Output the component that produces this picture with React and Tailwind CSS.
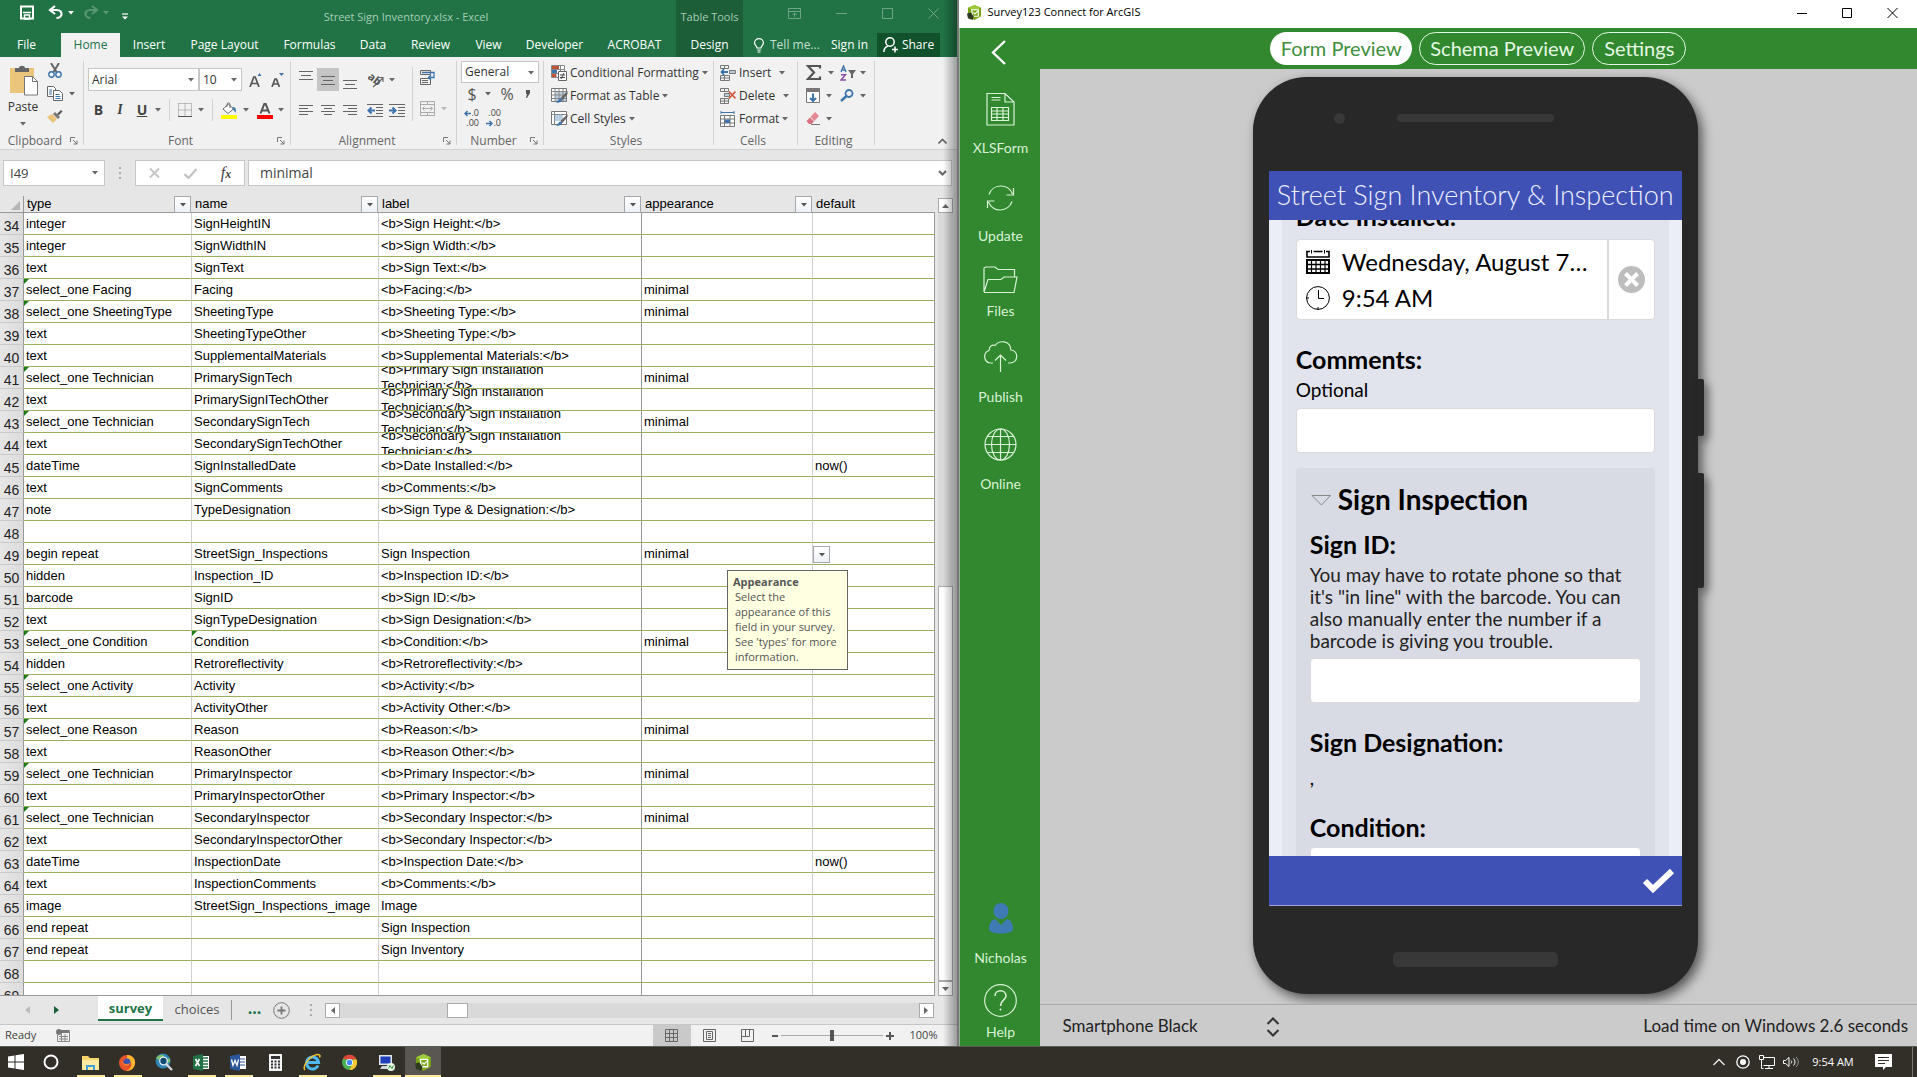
import React from "react";

const Svg = ({ w = 16, h = 16, children, className = "", ...rest }) => (
  <svg width={w} height={h} viewBox={`0 0 ${w} ${h}`} fill="none" aria-hidden="true" className={`shrink-0 ${className}`} {...rest}>
    {children}
  </svg>
);

const Caret = ({ c = "#666", className = "" }) => (
  <Svg w={6} h={4} className={className}>
    <path d="M0 0h6L3 3.6z" fill={c} />
  </Svg>
);

const Btn = ({ label, className = "", children }) => (
  <button type="button" aria-label={label} className={`flex shrink-0 items-center justify-center ${className}`}>
    {children}
  </button>
);

/* ---------- Excel title bar ---------- */

const tabs = [
  ["File", "w-[61px] pr-2"],
  ["Home", "w-[59px] bg-[#f1f1f1] text-[#217346]"],
  ["Insert", "w-[58px]"],
  ["Page Layout", "w-[93px]"],
  ["Formulas", "w-[77px]"],
  ["Data", "w-[50px]"],
  ["Review", "w-[65px]"],
  ["View", "w-[51px]"],
  ["Developer", "w-[81px]"],
  ["ACROBAT", "w-[79px]"],
];

function ExcelHeader() {
  return (
    <header className="flex h-[57px] shrink-0 bg-[#217346] text-xs text-white">
      <div className="flex w-[676px] shrink-0 flex-col">
        <div className="flex h-[33px]">
          <div className="flex w-[136px] items-start pt-[5px] pl-5">
            <Btn label="Save" className="w-[14px]">
              <Svg w={14} h={15}>
                <path d="M1 1.5h12v12H1z" stroke="#fff" strokeWidth="2" />
                <path d="M3 7.5h8M4.5 10h5v4h-5z" stroke="#fff" strokeWidth="1.5" />
              </Svg>
            </Btn>
            <Btn label="Undo" className="ml-[14px] w-4">
              <Svg w={16} h={15}>
                <path d="M7 1 2 5l5 4M2.500 5H9c3 0 4.500 2 4.500 4s-2 4-5 4" stroke="#fff" strokeWidth="2.200" />
              </Svg>
            </Btn>
            <Caret c="#fff" className="mt-[6px] ml-1" />
            <Btn label="Redo" className="ml-[9px] w-4 opacity-25">
              <Svg w={16} h={15}>
                <path d="M9 1l5 4-5 4M13.500 5H7C4 5 2.500 7 2.500 9s2 4 5 4" stroke="#fff" strokeWidth="2.200" />
              </Svg>
            </Btn>
            <Caret c="#5b9a78" className="mt-[6px] ml-1" />
            <Btn label="Customize Quick Access Toolbar" className="mt-2 ml-[13px]">
              <Svg w={6} h={7}>
                <path d="M0 1h6" stroke="#fff" strokeWidth="1.200" />
                <path d="M0 3.500h6L3 6.500z" fill="#fff" />
              </Svg>
            </Btn>
          </div>
          <h1 className="flex-1 pt-[9px] text-center text-[11px] leading-4 text-[#a8ccb7]">Street Sign Inventory.xlsx - Excel</h1>
        </div>
        <nav className="flex h-6">
          {tabs.map(([t, c]) => (
            <button key={t} type="button" className={`shrink-0 text-center whitespace-nowrap ${c}`}>
              {t}
            </button>
          ))}
        </nav>
      </div>
      <div className="flex w-[67px] shrink-0 flex-col bg-[#1b5e38]">
        <span className="h-[33px] pt-[9px] text-center text-[11px] leading-4 whitespace-nowrap text-[#a8ccb7]">Table Tools</span>
        <button type="button" className="h-6">
          Design
        </button>
      </div>
      <div className="flex min-w-0 flex-1 flex-col">
        <div className="flex h-[33px] items-start justify-end gap-[35px] pt-2 pr-5 text-[#6fa586]">
          <Btn label="Ribbon Display Options">
            <Svg w={13} h={11}>
              <path d="M.5.5h12v10H.5zM.5 3.500h12M6.500 9V5M4.500 7l2-2 2 2" stroke="currentColor" />
            </Svg>
          </Btn>
          <Btn label="Minimize">
            <Svg w={11} h={11}>
              <path d="M0 5.500h11" stroke="currentColor" />
            </Svg>
          </Btn>
          <Btn label="Maximize">
            <Svg w={11} h={11}>
              <path d="M.5.5h10v10H.5z" stroke="currentColor" />
            </Svg>
          </Btn>
          <Btn label="Close">
            <Svg w={11} h={11}>
              <path d="M.5.500l10 10M10.500.500l-10 10" stroke="currentColor" />
            </Svg>
          </Btn>
        </div>
        <div className="flex h-6 items-center">
          <button type="button" className="ml-[11px] flex w-[77px] items-center gap-[6px] whitespace-nowrap text-[#c5decf]">
            <Svg w={10} h={15}>
              <path d="M3 10C3 8 .6 7.500.6 4.800a4.400 4.200 0 0 1 8.800 0C9.400 7.500 7 8 7 10zM3.200 12h3.600M3.500 14h3" stroke="#fff" strokeWidth="1.200" />
            </Svg>
            Tell me...
          </button>
          <button type="button" className="w-[36px] whitespace-nowrap">
            Sign in
          </button>
          <button type="button" className="ml-[10px] flex h-6 w-[63px] items-center justify-center gap-1 bg-[#11512c]">
            <Svg w={15} h={16}>
              <circle cx="7" cy="5" r="4.200" stroke="#fff" strokeWidth="1.500" />
              <path d="M.8 15c.3-3.500 2-5.500 4.200-5.800M9 12.500h6M12 9.500v6" stroke="#fff" strokeWidth="1.500" />
            </Svg>
            Share
          </button>
        </div>
      </div>
    </header>
  );
}

/* ---------- Ribbon ---------- */

function Group({ title, width, launcher, children }) {
  return (
    <section className={`flex shrink-0 pt-1 ${width}`}>
      <div className="flex min-w-0 flex-1 flex-col">
        <div className="h-[72px] shrink-0">{children}</div>
        <div className="flex h-4 shrink-0 items-center pr-[5px] leading-4 text-[#666]">
          <span className="flex-1 text-center">{title}</span>
          {launcher && (
            <Btn label={`${title} settings`}>
              <Svg w={8} h={8}>
                <path d="M.5 5V.5H5M3 3l4 4M7 3.500V7H3.500" stroke="#777" />
              </Svg>
            </Btn>
          )}
        </div>
      </div>
      <div className="mb-1 w-px bg-[#d2d2d2]" />
    </section>
  );
}

const Select = ({ label, value, className }) => (
  <span className={`relative block border border-[#c6c6c6] bg-white ${className}`}>
    <select aria-label={label} className="size-full appearance-none bg-transparent pl-[3px] outline-none">
      <option>{value}</option>
    </select>
    <Caret className="pointer-events-none absolute top-[9px] right-[4px]" />
  </span>
);

const Lines = ({ d }) => (
  <Svg w={14} h={12}>
    <path d={d} stroke="#666" />
  </Svg>
);

function Clipboard() {
  return (
    <div className="flex pl-[9px]">
      <button type="button" className="flex w-7 flex-col items-center pt-1">
        <Svg w={30} h={32}>
          <path d="M2 3h24v25H2z" fill="#ecc57c" />
          <path d="M7 7V3h4c0-3 6-3 6 0h4v4z" fill="#666" />
          <path d="M16.500 11.500h8l5 5V30h-13z" fill="#fff" stroke="#777" />
          <path d="M24.500 11.500v5h5" stroke="#777" />
        </Svg>
        <span className="leading-5">Paste</span>
        <Caret className="mt-[5px]" />
      </button>
      <div className="flex flex-col gap-2 pt-[2px] pl-[10px]">
        <Btn label="Cut" className="w-4">
          <Svg w={14} h={15}>
            <path d="M3 0l5.500 9M11 0 5.500 9" stroke="#666" strokeWidth="2" />
            <circle cx="3.500" cy="11.500" r="2.700" stroke="#3c74ab" strokeWidth="1.400" />
            <circle cx="10.500" cy="11.500" r="2.700" stroke="#3c74ab" strokeWidth="1.400" />
          </Svg>
        </Btn>
        <div className="flex items-center gap-[6px]">
          <Btn label="Copy">
            <Svg w={16} h={15}>
              <path d="M.5.500h6l2 2v8h-8z" fill="#fff" stroke="#666" />
              <path d="M6.500 4.500h6l3 3v7h-9z" fill="#fff" stroke="#666" />
              <path d="M2 4h3M2 6h3M2 8h3M8.500 8.500h4M8.500 10.500h5M8.500 12.500h5" stroke="#3c74ab" />
            </Svg>
          </Btn>
          <Caret />
        </div>
        <Btn label="Format Painter" className="w-4">
          <Svg w={16} h={15}>
            <path d="M0 8l5-3 5 5-4 4z" fill="#ecc57c" />
            <path d="M6 5l2-2 5 5-2 2z" fill="#777" />
            <path d="M10 5l4-4 1.500 1.500-4 4z" fill="#555" />
          </Svg>
        </Btn>
      </div>
    </div>
  );
}

function FontGroup() {
  return (
    <div className="pt-[7px] pl-1">
      <div className="flex items-center">
        <Select label="Font" value="Arial" className="h-[23px] w-[111px]" />
        <Select label="Font size" value="10" className="h-[23px] w-[43px]" />
        <Btn label="Increase font size" className="ml-[2px] w-[22px]">
          <Svg w={13} h={14}>
            <path d="M1 14l3.800-10h1.400L10 14M2.500 10.500h6" stroke="#555" strokeWidth="1.700" />
            <path d="M8.500 3l2-3 2 3z" fill="#3c74ab" />
          </Svg>
        </Btn>
        <Btn label="Decrease font size" className="w-[22px]">
          <Svg w={13} h={14}>
            <path d="M1 14l3-8h1.400l3 8M2.200 11h5" stroke="#555" strokeWidth="1.700" />
            <path d="M8 0l2.500 3L13 0z" fill="#3c74ab" />
          </Svg>
        </Btn>
      </div>
      <div className="mt-2 flex h-[22px] items-center text-sm text-[#444]">
        <button type="button" className="w-[21px] font-bold">B</button>
        <button type="button" className="w-[22px] font-['Liberation_Serif'] font-bold italic">I</button>
        <button type="button" className="w-[22px] font-bold underline">U</button>
        <Caret className="ml-[2px]" />
        <div className="mx-2 h-[22px] w-px bg-[#d2d2d2]" />
        <Btn label="Borders">
          <Svg w={14} h={14}>
            <path d="M.5.500h13v13M.5 .5v13M7 .5v13M.5 7h13" stroke="#888" strokeDasharray="1 1" />
            <path d="M0 13.500h14" stroke="#555" />
          </Svg>
        </Btn>
        <Caret className="ml-[6px]" />
        <div className="mx-2 h-[22px] w-px bg-[#d2d2d2]" />
        <Btn label="Fill color">
          <Svg w={16} h={17}>
            <path d="M7.500 2l5 5-5.500 4.500-5-4.500zM6 5V2.500a1.500 1.500 0 0 1 3 0V6" fill="#fff" stroke="#666" />
            <path d="M11.500 5c3 0 4 2 3 6-1-2-1.500-3-3-4z" fill="#3c74ab" />
            <path d="M0 13h16v4H0z" fill="#ff0" />
          </Svg>
        </Btn>
        <Caret className="ml-[6px]" />
        <Btn label="Font color" className="ml-2">
          <Svg w={16} h={17}>
            <path d="M3.500 11.500 7.300 2h1.400l3.800 9.500M5 8.500h6" stroke="#555" strokeWidth="2" />
            <path d="M0 13h16v4H0z" fill="#f00" />
          </Svg>
        </Btn>
        <Caret className="ml-[5px]" />
      </div>
    </div>
  );
}

function AlignmentGroup() {
  return (
    <div className="flex pl-1">
      <div className="w-[117px] pt-[7px]">
        <div className="flex h-[23px] items-center">
          <Btn label="Top align" className="h-full w-[22px] pb-2"><Lines d="M0 1.500h14M2 5.500h10M0 9.500h14" /></Btn>
          <Btn label="Middle align" className="h-full w-[22px] bg-[#c5c5c5]"><Lines d="M0 2.500h14M2 6.500h10M0 10.500h14" /></Btn>
          <Btn label="Bottom align" className="h-full w-[22px] pt-2"><Lines d="M0 2.500h14M2 6.500h10M0 10.500h14" /></Btn>
          <Btn label="Orientation" className="ml-[7px] gap-1">
            <Svg w={17} h={16}>
              <path d="M5 15 15 6M15 10V5.500h-4" stroke="#666" strokeWidth="1.200" />
              <text x="0" y="9" fontSize="11" fontWeight="bold" fill="#555" transform="rotate(38 4 6)">ab</text>
            </Svg>
            <Caret />
          </Btn>
        </div>
        <div className="mt-2 flex h-[22px] items-center">
          <Btn label="Align left" className="w-[22px]"><Lines d="M0 1.500h14M0 4.500h9M0 7.500h14M0 10.500h9" /></Btn>
          <Btn label="Center" className="w-[22px]"><Lines d="M0 1.500h14M3 4.500h8M0 7.500h14M3 10.500h8" /></Btn>
          <Btn label="Align right" className="w-[22px]"><Lines d="M0 1.500h14M5 4.500h9M0 7.500h14M5 10.500h9" /></Btn>
          <Btn label="Decrease indent" className="ml-[3px] w-[22px]">
            <Svg w={16} h={13}>
              <path d="M0 .5h16M9 3.500h7M9 6.500h7M9 9.500h7M0 12.500h16" stroke="#666" />
              <path d="M8 6.500H2M4.500 3.500l-3 3 3 3" stroke="#3c74ab" strokeWidth="2" />
            </Svg>
          </Btn>
          <Btn label="Increase indent" className="w-[22px]">
            <Svg w={16} h={13}>
              <path d="M0 .5h16M9 3.500h7M9 6.500h7M9 9.500h7M0 12.500h16" stroke="#666" />
              <path d="M0 6.500h6M3.500 3.500l3 3-3 3" stroke="#3c74ab" strokeWidth="2" />
            </Svg>
          </Btn>
        </div>
      </div>
      <div className="mt-[6px] h-[54px] w-px bg-[#d2d2d2]" />
      <div className="flex flex-col gap-[15px] pt-[9px] pl-[7px]">
        <Btn label="Wrap text" className="w-4">
          <Svg w={16} h={16}>
            <path d="M.5.500h10v4H.5zM.5 8.500h10v6H.5zM2 10.500h6M2 12.500h6" stroke="#666" />
            <path d="M2 2.500h12v5h-5M11 5l-2.500 2.500L11 10" stroke="#3c74ab" strokeWidth="1.300" />
          </Svg>
        </Btn>
        <div className="flex items-center gap-[6px]">
          <Btn label="Merge and center">
            <Svg w={15} h={15}>
              <path d="M.5.500h14v14H.5zM.5 3.500h14M.5 11.500h14M7.500 .5v3M7.500 11.500v3M2.500 7.500h10M4.500 5.500l-2 2 2 2M10.500 5.500l2 2-2 2" stroke="#aaa" />
            </Svg>
          </Btn>
          <Caret c="#bbb" />
        </div>
      </div>
    </div>
  );
}

function NumberGroup() {
  return (
    <div className="pl-1">
      <Select label="Number format" value="General" className="h-[22px] w-[78px]" />
      <div className="flex h-[22px] items-center text-base leading-4 text-[#555]">
        <button type="button" className="w-[22px]">$</button>
        <Caret className="ml-[2px]" />
        <button type="button" className="ml-1 w-6">%</button>
        <button type="button" aria-label="Comma style" className="flex w-4 justify-center">
          <Svg w={5} h={8}><path d="M1 0h4v3L2 8H1l1-4H1z" fill="#555" /></Svg>
        </button>
      </div>
      <div className="flex gap-[6px] pt-[3px] pl-[2px] text-[9px] leading-[10px] text-[#444]">
        <button type="button" aria-label="Increase decimal" className="flex w-4 flex-col items-end">
          <span className="flex items-center">
            <Svg w={7} h={7}><path d="M7 3.500H1M3.500 1 1 3.500 3.500 6" stroke="#3c74ab" strokeWidth="1.500" /></Svg>.0
          </span>
          <span>.00</span>
        </button>
        <button type="button" aria-label="Decrease decimal" className="flex w-4 flex-col items-end">
          <span>.00</span>
          <span className="flex items-center">
            <Svg w={7} h={7}><path d="M0 3.500h6M3.500 1 6 3.500 3.500 6" stroke="#3c74ab" strokeWidth="1.500" /></Svg>.0
          </span>
        </button>
      </div>
    </div>
  );
}

const CondIcon = () => (
  <Svg w={17} h={16}>
    <path d="M.5.500h13v12H.5zM.5 4.500h13M.5 8.500h13M5 .5v12M9.500 .5v12" fill="#fff" stroke="#888" />
    <path d="M1 1h7v3H1zM1 9h4v3H1z" fill="#c2513a" />
    <path d="M1 5h5v3H1z" fill="#3c74ab" />
    <path d="M7.500 6.500h8v9h-8z" fill="#fff" stroke="#666" />
    <path d="M9 10h5M9 12.500h5M13 8l-3 6" stroke="#444" />
  </Svg>
);
const TableIcon = ({ cell }) => (
  <Svg w={17} h={16}>
    <path d="M.5.500h15v13H.5z" fill="#fff" stroke="#777" />
    {cell ? <path d="M4 4h8v6H4z" fill="#b9cfe2" /> : <path d="M4 4h11v9H4z" fill="#b9cfe2" />}
    <path d={cell ? "M3.500 .5v13M.5 3.500h15" : "M.5 3.500h15M.5 7h15M.5 10.500h15M4 .5v13M8 .5v13M12 .5v13"} stroke="#888" />
    <path d="M16.500 3v3l-5 6-2-2z" fill="#666" />
    <path d="M4 15c3 0 3-5 6-4.500 2.500 1 1 4.500-6 4.500z" fill="#3c74ab" />
  </Svg>
);
const InsertIcon = () => (
  <Svg w={17} h={16}>
    <path d="M.5.500h4v3h-4zM4.500.500h4v3h-4zM.5 10.500h4v5h-4zM4.500 10.500h5v5h-5zM.5 13h9" stroke="#777" />
    <path d="M9.500 5.500h6v3h-6z" fill="#b9cfe2" stroke="#777" />
    <path d="M8 7H2M4 4 1.500 7 4 10" stroke="#3c74ab" strokeWidth="1.800" />
  </Svg>
);
const DeleteIcon = () => (
  <Svg w={17} h={16}>
    <path d="M.5.500h4v3h-4zM4.500.500h4v3h-4zM.5 10.500h4v5h-4zM4.500 10.500h4v5h-4zM.5 13h8" stroke="#777" />
    <path d="M4.500 5.500h5v3h-5z" fill="#b9cfe2" stroke="#777" />
    <path d="M9 3.500l6.500 7M15.500 3.500 9 10.500" stroke="#d0583a" strokeWidth="1.800" />
  </Svg>
);
const FormatIcon = () => (
  <Svg w={17} h={16}>
    <path d="M1 1.500h13M1 0v3M14 0v3" stroke="#3c74ab" />
    <path d="M.5 4.500h14v11H.5zM.5 8h14M.5 12h14M4.500 4.500v11M10 4.500v11" fill="#fff" stroke="#777" />
    <path d="M5 8.500h5v3.500H5z" fill="#3c74ab" />
  </Svg>
);

const Cmd = ({ icon, gap = "gap-[3px]", children }) => (
  <button type="button" className={`flex h-[23px] items-center whitespace-nowrap ${gap}`}>
    <span className="flex items-center gap-[2px]">{icon}{children}</span>
    <Caret />
  </button>
);

function EditingGroup() {
  return (
    <div className="grid grid-cols-[34px_auto] pl-2">
      <Btn label="AutoSum" className="h-[23px] justify-start! gap-[6px]">
        <Svg w={16} h={15}><path d="M14 3.500V1H2l6 6.500L2 14h12v-2.500" stroke="#555" strokeWidth="2.200" /></Svg><Caret />
      </Btn>
      <Btn label="Sort and filter" className="h-[23px] justify-start! gap-1">
        <Svg w={16} h={16}>
          <path d="M1 7l2.500-6L6 7M2 5h3" stroke="#3c74ab" strokeWidth="1.400" />
          <path d="M1 9.700h4.500L1 15h5" stroke="#8a4fa8" strokeWidth="1.400" />
          <path d="M8 5h8l-3 4v4h-2V9z" fill="#666" />
        </Svg><Caret />
      </Btn>
      <Btn label="Fill" className="h-[23px] justify-start! gap-[6px]">
        <Svg w={14} h={15}>
          <path d="M.5.500h13v14H.5z" fill="#fff" stroke="#777" />
          <path d="M0 0h14v4H0z" fill="#777" />
          <path d="M7 5.500V13M4 10l3 3 3-3" stroke="#3c74ab" strokeWidth="2" />
        </Svg><Caret />
      </Btn>
      <Btn label="Find and select" className="h-[23px] justify-start! gap-[6px]">
        <Svg w={14} h={13}>
          <circle cx="9" cy="4.500" r="3.500" stroke="#3c74ab" strokeWidth="1.800" />
          <path d="M6.500 7 1 12" stroke="#3c74ab" strokeWidth="2.400" />
        </Svg><Caret />
      </Btn>
      <Btn label="Clear" className="h-[23px] justify-start! gap-[6px]">
        <Svg w={14} h={13}>
          <path d="M9 0l4 4-4.500 5-4-4z" fill="#e58a95" />
          <path d="M4 5.500 8 9.500 5.500 12H3L.5 9z" fill="#d9707e" />
          <path d="M5 12.500h9" stroke="#777" />
        </Svg><Caret />
      </Btn>
    </div>
  );
}

function Ribbon() {
  return (
    <div className="flex h-[93px] shrink-0 border-b border-[#d2d2d2] bg-[#f1f1f1] text-xs text-[#333]">
      <Group title="Clipboard" width="w-[84px]" launcher><Clipboard /></Group>
      <Group title="Font" width="w-[207px]" launcher><FontGroup /></Group>
      <Group title="Alignment" width="w-[166px]" launcher><AlignmentGroup /></Group>
      <Group title="Number" width="w-[87px]" launcher><NumberGroup /></Group>
      <Group title="Styles" width="w-[170px]">
        <div className="pl-[7px]">
          <Cmd icon={<CondIcon />}>Conditional Formatting</Cmd>
          <Cmd icon={<TableIcon />}>Format as Table</Cmd>
          <Cmd icon={<TableIcon cell />}>Cell Styles</Cmd>
        </div>
      </Group>
      <Group title="Cells" width="w-[84px]">
        <div className="pl-[6px]">
          <Cmd icon={<InsertIcon />} gap="gap-2">Insert</Cmd>
          <Cmd icon={<DeleteIcon />} gap="gap-2">Delete</Cmd>
          <Cmd icon={<FormatIcon />}>Format</Cmd>
        </div>
      </Group>
      <Group title="Editing" width="w-[77px]"><EditingGroup /></Group>
      <div className="flex flex-1 items-end justify-end pr-3 pb-[5px]">
        <Btn label="Collapse the Ribbon">
          <Svg w={9} h={6}><path d="M.5 5.500l4-4 4 4" stroke="#666" strokeWidth="1.600" /></Svg>
        </Btn>
      </div>
    </div>
  );
}

const Dots = () => (
  <Svg w={2} h={12}><path d="M0 0h2v2H0zM0 5h2v2H0zM0 10h2v2H0z" fill="#aaa" /></Svg>
);

function FormulaBar() {
  return (
    <div className="flex h-[46px] shrink-0 items-start bg-[#e6e6e6] pt-[10px] pr-[7px] pl-[3px] text-sm text-[#444]">
      <div className="flex h-[26px] w-[102px] shrink-0 items-center border border-[#c6c6c6] bg-white pr-[6px]">
        <input aria-label="Name box" defaultValue="I49" className="w-full min-w-0 flex-1 bg-transparent pl-[6px] text-[13px] outline-none" />
        <Caret />
      </div>
      <span className="flex h-[26px] w-[30px] shrink-0 items-center justify-center"><Dots /></span>
      <div className="flex h-[26px] w-[110px] shrink-0 items-center border border-[#c6c6c6] bg-white">
        <Btn label="Cancel" className="w-[36px]"><Svg w={11} h={10}><path d="M1 .5l9 9M10 .5l-9 9" stroke="#c4c4c4" strokeWidth="2" /></Svg></Btn>
        <Btn label="Enter" className="w-[36px]"><Svg w={13} h={11}><path d="M.5 6l4 4 8-9" stroke="#c4c4c4" strokeWidth="2.400" /></Svg></Btn>
        <button type="button" aria-label="Insert function" className="w-[36px] font-['Liberation_Serif'] text-base leading-4 text-[#444] italic">
          f<span className="text-xs font-bold">x</span>
        </button>
      </div>
      <div className="ml-[3px] flex h-[26px] min-w-0 flex-1 items-center border border-[#c6c6c6] bg-white pr-1">
        <input aria-label="Formula" defaultValue="minimal" className="min-w-0 flex-1 bg-transparent pl-[11px] outline-none" />
        <Svg w={9} h={6}><path d="M1 1l3.500 3.500L8 1" stroke="#666" strokeWidth="2" /></Svg>
      </div>
    </div>
  );
}

/* ---------- Sheet ---------- */

const rows = [
  [34, "integer", "SignHeightIN", "<b>Sign Height:</b>"],
  [35, "integer", "SignWidthIN", "<b>Sign Width:</b>"],
  [36, "text", "SignText", "<b>Sign Text:</b>"],
  [37, "select_one Facing", "Facing", "<b>Facing:</b>", "minimal"],
  [38, "select_one SheetingType", "SheetingType", "<b>Sheeting Type:</b>", "minimal"],
  [39, "text", "SheetingTypeOther", "<b>Sheeting Type:</b>"],
  [40, "text", "SupplementalMaterials", "<b>Supplemental Materials:</b>"],
  [41, "select_one Technician", "PrimarySignTech", "<b>Primary Sign Installation Technician:</b>", "minimal"],
  [42, "text", "PrimarySignITechOther", "<b>Primary Sign Installation Technician:</b>"],
  [43, "select_one Technician", "SecondarySignTech", "<b>Secondary Sign Installation Technician:</b>", "minimal"],
  [44, "text", "SecondarySignTechOther", "<b>Secondary Sign Installation Technician:</b>"],
  [45, "dateTime", "SignInstalledDate", "<b>Date Installed:</b>", "", "now()"],
  [46, "text", "SignComments", "<b>Comments:</b>"],
  [47, "note", "TypeDesignation", "<b>Sign Type & Designation:</b>"],
  [48],
  [49, "begin repeat", "StreetSign_Inspections", "Sign Inspection", "minimal"],
  [50, "hidden", "Inspection_ID", "<b>Inspection ID:</b>"],
  [51, "barcode", "SignID", "<b>Sign ID:</b>"],
  [52, "text", "SignTypeDesignation", "<b>Sign Designation:</b>"],
  [53, "select_one Condition", "Condition", "<b>Condition:</b>", "minimal"],
  [54, "hidden", "Retroreflectivity", "<b>Retroreflectivity:</b>"],
  [55, "select_one Activity", "Activity", "<b>Activity:</b>"],
  [56, "text", "ActivityOther", "<b>Activity Other:</b>"],
  [57, "select_one Reason", "Reason", "<b>Reason:</b>", "minimal"],
  [58, "text", "ReasonOther", "<b>Reason Other:</b>"],
  [59, "select_one Technician", "PrimaryInspector", "<b>Primary Inspector:</b>", "minimal"],
  [60, "text", "PrimaryInspectorOther", "<b>Primary Inspector:</b>"],
  [61, "select_one Technician", "SecondaryInspector", "<b>Secondary Inspector:</b>", "minimal"],
  [62, "text", "SecondaryInspectorOther", "<b>Secondary Inspector:</b>"],
  [63, "dateTime", "InspectionDate", "<b>Inspection Date:</b>", "", "now()"],
  [64, "text", "InspectionComments", "<b>Comments:</b>"],
  [65, "image", "StreetSign_Inspections_image", "Image"],
  [66, "end repeat", "", "Sign Inspection"],
  [67, "end repeat", "", "Sign Inventory"],
  [68],
  [69],
];

const colLine = ["border-r-[#d0d0d0]", "border-r-[#d0d0d0]", "border-r-[#999]", "border-r-[#d0d0d0]", "border-r-[#999]"];

const Flag = () => (
  <Svg w={5} h={5} className="absolute top-0 left-0"><path d="M0 0h5L0 5z" fill="#1a7a1a" /></Svg>
);

function DropButton({ label, className = "" }) {
  return (
    <button type="button" aria-label={label} className={`absolute flex size-[17px] items-center justify-center border border-[#a5a9ae] bg-linear-to-b from-white to-[#eef1f6] ${className}`}>
      <Caret c="#555" />
    </button>
  );
}

function Sheet() {
  return (
    <div className="flex min-h-0 flex-1 bg-[#e6e6e6]">
      <div className="relative min-w-0 flex-1 overflow-hidden border-b border-[#999] font-['Liberation_Sans',Arial,sans-serif] text-black">
        <table className="w-full table-fixed border-separate border-spacing-0 text-[13px]">
          <colgroup>
            <col className="w-6" />
            <col className="w-[168px]" />
            <col className="w-[187px]" />
            <col className="w-[263px]" />
            <col className="w-[171px]" />
            <col />
          </colgroup>
          <thead>
            <tr className="h-[17px]">
              <th aria-label="Select all" className="border-r border-b border-[#999] p-0">
                <Svg w={9} h={9} className="mt-[2px] ml-[11px]"><path d="M9 0v9H0z" fill="#b5b5b5" /></Svg>
              </th>
              {["type", "name", "label", "appearance", "default"].map((h, i) => (
                <th key={h} scope="col" className="relative border-b border-[#999] p-0 pl-[3px] text-left leading-4 font-normal">
                  {h}
                  {i < 4 && <DropButton label={`Filter ${h}`} className="top-0 right-px" />}
                </th>
              ))}
            </tr>
          </thead>
          <tbody className="bg-white">
            {rows.map(([n, ...cells]) => (
              <tr key={n} className="h-[22px]">
                <th scope="row" className="border-r border-b border-r-[#999] border-b-[#c9c9c9] bg-linear-to-r from-[#e6e6e6] to-[#dcdcdc] p-0 pt-1 text-center text-[14px] leading-4 font-normal text-[#222]">
                  {n}
                </th>
                {colLine.map((c, i) => (
                  <td key={i} className={`relative border-r border-b border-b-[#9bb05f] p-0 ${c}`}>
                    <div className="flex h-[21px] items-center overflow-hidden pl-[2px]">
                      <span className={i === 2 ? "w-[210px] shrink-0 leading-4" : "whitespace-nowrap leading-4"}>{cells[i]}</span>
                    </div>
                    {((i === 0 && (cells[0] || "").startsWith("select")) || (i === 1 && n === 53)) && <Flag />}
                    {n === 49 && i === 4 && <DropButton label="Choose appearance" className="top-[3px] left-0" />}
                  </td>
                ))}
              </tr>
            ))}
          </tbody>
        </table>
        <div role="tooltip" className="absolute top-[374px] left-[727px] h-[100px] w-[121px] border border-[#666] bg-[#ffffe1] px-[7px] py-[3px] font-['Open_Sans','Noto_Sans',sans-serif] text-[11px] leading-[15px] whitespace-nowrap text-[#555]">
          <b className="block -ml-[2px]">Appearance</b>
          Select the
          <br />
          appearance of this
          <br />
          field in your survey.
          <br />
          See 'types' for more
          <br />
          information.
        </div>
      </div>
      <div className="mr-[6px] ml-[3px] flex w-[15px] shrink-0 flex-col pt-[2px]">
        <Btn label="Scroll up" className="h-[15px] border border-[#aaa] bg-white"><Svg w={7} h={4}><path d="M0 4h7L3.500 0z" fill="#666" /></Svg></Btn>
        <div className="min-h-0 flex-[374] bg-[#d9d9d9]" />
        <div className="min-h-0 flex-[395] border border-[#aaa] bg-white" />
        <Btn label="Scroll down" className="h-[15px] border border-[#aaa] bg-white"><Svg w={7} h={4}><path d="M0 0h7L3.500 4z" fill="#666" /></Svg></Btn>
      </div>
    </div>
  );
}

function SheetTabs() {
  return (
    <div className="flex h-7 shrink-0 items-center bg-[#e6e6e6] pr-[25px] text-[13px] text-[#555]">
      <Btn label="Previous sheets" className="ml-[25px]"><Svg w={5} h={8}><path d="M5 0v8L0 4z" fill="#bbb" /></Svg></Btn>
      <Btn label="Next sheets" className="ml-6"><Svg w={5} h={8}><path d="M0 0v8l5-4z" fill="#1b5e38" /></Svg></Btn>
      <button type="button" className="ml-[39px] h-[25px] w-[65px] shrink-0 self-start border-b-2 border-[#217346] bg-white pt-[3px] font-bold text-[#217346]">survey</button>
      <button type="button" className="h-5 w-[69px] shrink-0 border-r border-[#999]">choices</button>
      <button type="button" aria-label="More sheets" className="w-[45px] shrink-0 pb-1 text-base leading-4 font-bold text-[#217346]">...</button>
      <Btn label="New sheet" className="-ml-1">
        <Svg w={17} h={17}><circle cx="8.500" cy="8.500" r="7.800" stroke="#777" /><path d="M8.500 4.500v8M4.500 8.500h8" stroke="#777" strokeWidth="1.800" /></Svg>
      </Btn>
      <span className="mr-[13px] ml-5"><Dots /></span>
      <div className="flex h-[15px] flex-1 bg-[#d9d9d9]">
        <Btn label="Scroll left" className="w-[15px] border border-[#aaa] bg-white"><Svg w={4} h={7}><path d="M4 0v7L0 3.500z" fill="#666" /></Svg></Btn>
        <div className="ml-[107px] w-[21px] border border-[#aaa] bg-white" />
        <Btn label="Scroll right" className="ml-auto w-[15px] border border-[#aaa] bg-white"><Svg w={4} h={7}><path d="M0 0v7l4-3.500z" fill="#666" /></Svg></Btn>
      </div>
    </div>
  );
}

function StatusBar() {
  return (
    <footer className="flex h-[22px] shrink-0 items-center border-t border-[#c6c6c6] bg-[#f1f1f1] pl-[5px] text-[11px] text-[#444]">
      <span className="w-[51px]">Ready</span>
      <Btn label="Macro recording">
        <Svg w={14} h={13}>
          <path d="M3.500 1.500h10v11H1.500V6M3 7.500h9M3 10h9M5.500 5v7M9 5v7" stroke="#888" />
          <path d="M4 1h9v3H4z" fill="#777" /><circle cx="3" cy="3" r="3" fill="#777" />
        </Svg>
      </Btn>
      <div className="ml-auto flex h-full items-center">
        <Btn label="Normal view" className="h-full w-[38px] bg-[#c9c9c9]"><Svg w={13} h={13}><path d="M.5.500h12v12H.5zM.5 4.500h12M.5 8.500h12M4.500.500v12M8.500.500v12" stroke="#666" /></Svg></Btn>
        <Btn label="Page layout view" className="w-[38px]"><Svg w={13} h={13}><path d="M.5.500h12v12H.5zM3.500 2.500h6v8h-6zM5 4.500h3M5 6.500h3M5 8.500h3" stroke="#666" /></Svg></Btn>
        <Btn label="Page break preview" className="w-[38px]"><Svg w={13} h={13}><path d="M.5.500h12v12H.5zM4.500.500v7M8.500.500v7M.5 7.500h8" stroke="#666" /></Svg></Btn>
        <Btn label="Zoom out" className="ml-[5px]"><Svg w={6} h={8}><path d="M0 4h6" stroke="#555" strokeWidth="2" /></Svg></Btn>
        <input
          type="range"
          aria-label="Zoom"
          defaultValue="50"
          className="mx-[3px] h-[11px] w-[102px] appearance-none bg-linear-to-b from-transparent from-45% via-[#aaa] via-50% to-transparent to-55% [&::-webkit-slider-thumb]:h-[11px] [&::-webkit-slider-thumb]:w-1 [&::-webkit-slider-thumb]:appearance-none [&::-webkit-slider-thumb]:bg-[#555]"
        />
        <Btn label="Zoom in"><Svg w={8} h={8}><path d="M0 4h8M4 0v8" stroke="#555" strokeWidth="2" /></Svg></Btn>
        <button type="button" className="mr-[21px] ml-4 w-[28px] whitespace-nowrap">100%</button>
      </div>
    </footer>
  );
}

function Excel() {
  return (
    <section className="relative flex min-h-0 w-1/2 shrink-0 flex-col overflow-hidden font-['Open_Sans','Noto_Sans',sans-serif]">
      <ExcelHeader />
      <Ribbon />
      <FormulaBar />
      <Sheet />
      <SheetTabs />
      <StatusBar />
      <div className="pointer-events-none absolute inset-y-0 right-0 w-4 border-r-2 border-[#777] bg-linear-to-r from-transparent to-black/35" />
    </section>
  );
}

/* ---------- Survey123 Connect ---------- */

const Hex = ({ s = 15 }) => (
  <svg width={s} height={s} viewBox="0 0 16 16" aria-hidden="true" className="shrink-0">
    <path d="M8 0l7 3v9l-7 4-7-4V3z" fill="#7aa516" />
    <path d="M8 0l7 3-7 3-7-3z" fill="#9ccb3b" />
    <path d="M5 5h7v7H6z" fill="none" stroke="#fff" strokeWidth="1.200" />
    <path d="M7 8l1.500 1.500L12 6" fill="none" stroke="#fff" strokeWidth="1.200" />
    <path d="M0 9l4-1 3 4-1 4-5-2z" fill="#2c3a20" />
  </svg>
);

const side = [
  ["XLSForm", "h-[87px] pt-[19px]", 33, "mt-3",
    <><path d="M4 .5h18l9 8.500V32H4zM22 .5V9h9M8.500 4.500h9M8.500 7h9M8.500 14.500h17v13h-17zM8.500 18h17M8.500 21h17M8.500 24.500h17M14 14.500v13M20 14.500v13" /></>],
  ["Update", "h-[88px] pt-6", 26, "mt-[15px]",
    <><path d="M6 9.500A12.500 12.500 0 0 1 29.500 9M30.500 3v7h-7M29 16.500A12.500 12.500 0 0 1 5.500 17M4.500 23v-7h7" /></>],
  ["Files", "h-[71px] pt-[17px]", 27, "mt-2",
    <><path d="M1 26V2l2-1h9l3 2.500h16.500V11M1 26l4-12.500h13l3-2.500h13L31 26.500H1" /></>],
  ["Publish", "h-[88px] pt-[21px]", 31, "mt-[15px]",
    <><path d="M10 22H7a6.500 6.500 0 0 1-1-12.500c0-5 4-6 6-5C16-1 27-1 28 9c8 1 7.500 13-1 13h-2M17.500 31V14M12 19.500l5.500-5.500 5.500 5.500" /></>],
  ["Online", "h-[90px] pt-5", 33, "mt-[13px]",
    <><circle cx="17.500" cy="16.500" r="15.500" /><ellipse cx="17.500" cy="16.500" rx="9" ry="15.500" /><path d="M17.500 1v31M2 16.500h31M4.500 8.500h26M4.500 24.500h26" /></>],
];

function SideButton({ label, box, h, gap, children }) {
  return (
    <button type="button" className={`flex w-full flex-col items-center ${box}`}>
      <Svg w={35} h={h} stroke="#d9f2d9" strokeWidth="1.200">{children}</Svg>
      <span className={`text-sm leading-5 ${gap}`}>{label}</span>
    </button>
  );
}

function Phone() {
  const label = "text-[25px] leading-8 font-bold";
  const field = "block h-[45px] w-full rounded border border-[#d9d9de] bg-white outline-none";
  return (
    <div className="mt-2 flex h-[917px] max-h-full items-start">
      <div className="flex h-full w-[445px] flex-col rounded-[54px] bg-[#282828] px-4 shadow-[4px_5px_12px_rgba(0,0,0,0.6)]">
        <div className="flex h-[94px] shrink-0 items-start pt-[36px]">
          <div className="ml-[65px] size-[11px] rounded-full bg-[#383838]" />
          <div className="mt-[1px] ml-[52px] h-2 w-[157px] rounded-sm bg-[#383838]" />
        </div>
        <div className="flex min-h-0 flex-1 flex-col border-b border-[#9aa3d8] bg-[#ebeef7] text-black">
          <h2 className="flex h-[49px] shrink-0 items-center justify-center bg-[#3f51b5] text-[27px] font-light whitespace-nowrap text-[#eef]">
            Street Sign Inventory &amp; Inspection
          </h2>
          <div className="flex min-h-0 flex-1 flex-col overflow-hidden px-[13px]">
            <div className="-mt-5 bg-[#e1e4ec] px-[14px] pb-10">
              <p className={label}>Date Installed:</p>
              <div className="mt-[7px] flex h-[81px] rounded border border-[#d9d9de] bg-white text-2xl">
                <div className="flex min-w-0 flex-1 flex-col justify-center gap-1 pl-[9px]">
                  <button type="button" className="flex h-8 items-center gap-3 text-left">
                    <Svg w={24} h={24} stroke="#000">
                      <path d="M4 1.500H1V7h22V1.500h-3M7.500 1.500h9" strokeWidth="1.600" />
                      <path d="M5.500 0v3.500M18.500 0v3.500" />
                      <path d="M1 10h22v13H1z" strokeWidth="2" />
                      <path d="M1 14.500h22M1 19h22" strokeWidth="1.600" />
                      <path d="M5.500 10v13M10 10v13M14.500 10v13M19 10v13" strokeWidth="1.200" />
                    </Svg>
                    <span className="whitespace-nowrap">Wednesday, August 7…</span>
                  </button>
                  <button type="button" className="flex h-8 items-center gap-3 text-left">
                    <Svg w={24} h={24} stroke="#000"><circle cx="12" cy="12" r="11.400" /><path d="M12.500 4v8.500H18M0 12h3M12 21v3" /></Svg>
                    <span>9:54 AM</span>
                  </button>
                </div>
                <Btn label="Clear date" className="w-[47px] border-l-2 border-[#d9d9de]">
                  <Svg w={27} h={27}><circle cx="13.500" cy="13.500" r="13.500" fill="#bdbdbd" /><path d="M7.500 7.500l12 12M19.500 7.500l-12 12" stroke="#fff" strokeWidth="4" /></Svg>
                </Btn>
              </div>
              <label htmlFor="comments" className={`mt-[23px] block ${label}`}>Comments:</label>
              <p className="mt-1 text-[19px] leading-[22px]">Optional</p>
              <input id="comments" className={`mt-[7px] ${field}`} />
              <div className="mt-[15px] rounded bg-[#d9dbe4] px-[14px] pt-[13px] pb-10">
                <button type="button" className="flex items-center gap-[6px] text-[28px] leading-9 font-bold">
                  <Svg w={22} h={12} className="mt-1"><path d="M2 .5h18.500L11.500 10z" stroke="#888" /></Svg>
                  Sign Inspection
                </button>
                <label htmlFor="signid" className={`mt-[11px] block ${label}`}>Sign ID:</label>
                <p className="mt-1 text-[19px] leading-[22px] text-[#222] whitespace-nowrap">
                  You may have to rotate phone so that
                  <br />
                  it's "in line" with the barcode. You can
                  <br />
                  also manually enter the number if a
                  <br />
                  barcode is giving you trouble.
                </p>
                <input id="signid" className={`mt-[6px] ${field}`} />
                <p className={`mt-[23px] ${label}`}>Sign Designation:</p>
                <p className="mt-2 h-6 text-[19px] leading-6">,</p>
                <label htmlFor="condition" className={`mt-[21px] block ${label}`}>Condition:</label>
                <input id="condition" className={`mt-1 ${field}`} />
              </div>
            </div>
          </div>
          <div className="flex h-[49px] shrink-0 items-center justify-end bg-[#3f51b5] pr-[7px]">
            <Btn label="Submit">
              <Svg w={34} h={28}><path d="M4 14l8 8L31 4" stroke="#fff" strokeWidth="6" /></Svg>
            </Btn>
          </div>
        </div>
        <div className="flex h-[88px] shrink-0 justify-center pt-[46px]">
          <div className="h-[15px] w-[165px] rounded-[5px] bg-[#383838]" />
        </div>
      </div>
      <div className="flex w-[6px] flex-col gap-[37px] pt-[302px]">
        <div className="h-[57px] rounded-r-xs bg-[#282828] shadow-[4px_5px_8px_rgba(0,0,0,0.5)]" />
        <div className="h-[115px] rounded-r-xs bg-[#282828] shadow-[4px_5px_8px_rgba(0,0,0,0.5)]" />
      </div>
    </div>
  );
}

function Survey() {
  return (
    <section className="flex min-h-0 min-w-0 flex-1 flex-col font-[Lato,'Open_Sans',sans-serif]">
      <header className="flex h-7 shrink-0 items-center gap-[6px] bg-white pr-[19px] pb-[3px] pl-2 font-['Open_Sans','Noto_Sans',sans-serif] text-xs text-black">
        <Hex />
        <span className="text-[11px]">Survey123 Connect for ArcGIS</span>
        <div className="ml-auto flex items-center gap-[35px]">
          <Btn label="Minimize window"><Svg w={10} h={10}><path d="M0 5.500h10" stroke="#000" /></Svg></Btn>
          <Btn label="Maximize window"><Svg w={10} h={10}><path d="M.5.500h9v9h-9z" stroke="#000" /></Svg></Btn>
          <Btn label="Close window"><Svg w={11} h={10}><path d="M.5 0l10 10M10.500 0l-10 10" stroke="#000" /></Svg></Btn>
        </div>
      </header>
      <div className="flex min-h-0 flex-1 border-l border-[#8fb58e]">
        <aside className="flex w-[80px] shrink-0 flex-col bg-[#31882e] pl-[2px] text-[#d9f2d9]">
          <Btn label="Back" className="h-[46px] pt-[2px] pr-1 text-white">
            <Svg w={15} h={25}><path d="M14 1 2 12.500 14 24" stroke="#fff" strokeWidth="2.400" /></Svg>
          </Btn>
          {side.map(([t, box, h, gap, icon]) => (
            <SideButton key={t} label={t} box={box} h={h} gap={gap}>{icon}</SideButton>
          ))}
          <button type="button" className="mt-auto flex flex-col items-center">
            <Svg w={26} h={32}>
              <ellipse cx="13" cy="8" rx="7.500" ry="8" fill="#3f7ab5" />
              <path d="M7 16l6 6 6-6c4 1 6 5 6 10 0 6-24 6-24 0 0-5 2-9 6-10z" fill="#3f7ab5" />
            </Svg>
            <span className="mt-[13px] text-sm leading-5">Nicholas</span>
          </button>
          <button type="button" className="mt-4 mb-1 flex flex-col items-center">
            <Svg w={33} h={33} stroke="#d9f2d9" strokeWidth="1.200">
              <circle cx="16.500" cy="16.500" r="15.800" />
              <path d="M11 12c0-7 11-7 11 0 0 4-5.500 4-5.500 10M16.500 24.500v2" strokeWidth="1.600" />
            </Svg>
            <span className="mt-[5px] text-sm leading-5">Help</span>
          </button>
        </aside>
        <div className="flex min-h-0 min-w-0 flex-1 flex-col">
          <nav className="flex h-[41px] shrink-0 items-center justify-center gap-[7px] bg-[#31882e] pb-px text-xl whitespace-nowrap text-[#e5f8e5]">
            <button type="button" className="h-[33px] w-[142px] rounded-full bg-white text-[#3f8f3c]">Form Preview</button>
            <button type="button" className="h-[33px] w-[166px] rounded-full border border-[#e5f8e5]">Schema Preview</button>
            <button type="button" className="h-[33px] w-[94px] rounded-full border border-[#e5f8e5]">Settings</button>
          </nav>
          <div className="flex min-h-0 flex-1 justify-center overflow-hidden bg-[#cbcbcb]">
            <Phone />
          </div>
          <footer className="flex h-[42px] shrink-0 items-center justify-between border-t border-[#aaa] bg-[#cbcbcb] pr-[9px] pl-[23px] text-[17px] text-[#222]">
            <span className="relative w-[217px]">
              <select aria-label="Device" className="w-full appearance-none bg-transparent outline-none">
                <option>Smartphone Black</option>
              </select>
              <Svg w={14} h={20} className="pointer-events-none absolute top-[4px] right-0"><path d="M1.500 7 7 1.500 12.500 7M1.500 13 7 18.500 12.500 13" stroke="#333" strokeWidth="2" /></Svg>
            </span>
            <span>Load time on Windows 2.6 seconds</span>
          </footer>
        </div>
      </div>
    </section>
  );
}

/* ---------- Taskbar ---------- */

const apps = [
  ["File Explorer", "border-[#fbeaa0]", <><path d="M1 3h6l2 2h9v12H1z" fill="#f7d36b" /><path d="M1 7h17v10H1z" fill="#fde9a0" /><path d="M5 17v-5h9v5h-2v-3H7v3z" fill="#3fa0dc" /></>],
  ["Firefox", "border-[#fbeaa0]", <><circle cx="9" cy="10" r="8" fill="#e8542a" /><path d="M9 2c6 0 9 5 8 9-1 5-5 7-9 7 7-3 7-9 1-11z" fill="#ffb52e" /><circle cx="9" cy="9" r="3.500" fill="#3a55b0" /><path d="M2 5c2 6 6 7 10 5-1 5-9 4-10-5z" fill="#f5762c" /></>],
  ["ArcGIS Desktop", "border-transparent", <><circle cx="8" cy="8" r="7.500" fill="#2f86b5" /><path d="M1 5c3-4 7-4 8-2s-5 6-8 2zM11 11c3-1 5-3 4-5s-5 2-4 5z" fill="#7fc26b" /><circle cx="8.500" cy="8" r="3.800" stroke="#e5eef5" strokeWidth="1.300" fill="#134a70" /><path d="M11 11l6 6" stroke="#cfd8de" strokeWidth="2.400" /></>],
  ["Excel", "border-[#fbeaa0]", <><path d="M9 3h8v13H9z" fill="#fff" /><path d="M11 5h5M11 8h5M11 11h5M11 14h5" stroke="#217346" strokeWidth="1.500" /><path d="M1 3l10-2v17L1 16z" fill="#217346" /><path d="M3.500 6l4 7M7.500 6l-4 7" stroke="#fff" strokeWidth="1.600" /></>],
  ["Word", "border-[#fbeaa0]", <><path d="M9 3h8v13H9z" fill="#fff" /><path d="M11 6h5M11 9h5M11 12h5" stroke="#2b579a" /><path d="M1 3l10-2v17L1 16z" fill="#2b579a" /><path d="M2.500 6.500l1.500 6 2-5 2 5 1.500-6" stroke="#fff" strokeWidth="1.300" /></>],
  ["Calculator", "border-transparent", <><path d="M3 1h13v17H3z" fill="#f5f5f5" /><path d="M5 3h9v3H5z" fill="#333" /><path d="M5 8.500h9M5 11.500h9M5 14.500h9" stroke="#333" strokeWidth="1.800" strokeDasharray="2 1.500" /></>],
  ["Internet Explorer", "border-[#fbeaa0]", <><path d="M15 12.500A6 6 0 1 1 15.500 9.500H5" stroke="#4cb8ee" strokeWidth="3" /><path d="M2 17C-1 14 6 3 14 1.500c4-.5 3 2 2.500 3" stroke="#f2c230" strokeWidth="1.500" /></>],
  ["Chrome", "border-transparent", <><circle cx="9.500" cy="9.500" r="7.500" fill="#4caf50" /><path d="M2.800 6A7.500 7.500 0 0 1 16.500 6.500h-7z" fill="#e0453a" /><path d="M16.500 6.500a7.500 7.500 0 0 1-7 10.500l3.500-7V6.500z" fill="#f7c52e" /><circle cx="9.500" cy="9.500" r="3.600" fill="#fff" /><circle cx="9.500" cy="9.500" r="2.700" fill="#4285f4" /></>],
  ["Remote Desktop", "border-[#fbeaa0]", <><path d="M2 2h13v10H2z" fill="#dfe6ee" /><path d="M3.500 3.500h10v7h-10z" fill="#1f3fb8" /><path d="M5 13h7l2 3H3z" fill="#cdd5dd" /><circle cx="14" cy="14" r="4" fill="#e7f5e2" /><path d="M11.500 15.500l1.500-3 2 3 1.500-3" stroke="#2c9b3a" /></>],
];

function Taskbar() {
  return (
    <footer className="flex h-[31px] shrink-0 items-stretch border-t border-[#5b5a55] bg-[#322e28] font-['Open_Sans','Noto_Sans',sans-serif] text-[11px] text-white">
      <Btn label="Start" className="w-[31px]">
        <Svg w={16} h={16}><path d="M0 2.500 6.500 1.500v6H0zM7.500 1.300 16 0v7.500H7.500zM0 8.500h6.500v6L0 13.500zM7.500 8.500H16V16l-8.500-1.300z" fill="#fff" /></Svg>
      </Btn>
      <Btn label="Cortana" className="mr-[1px] w-[40px]"><Svg w={16} h={16}><circle cx="8" cy="8" r="6.500" stroke="#fff" strokeWidth="2" /></Svg></Btn>
      {apps.map(([t, b, icon]) => (
        <Btn key={t} label={t} className="w-[37px] px-1">
          <span className={`flex h-full w-7 items-center justify-center border-b-2 pt-[2px] ${b}`}><Svg w={19} h={19}>{icon}</Svg></span>
        </Btn>
      ))}
      <Btn label="Survey123 Connect" className="w-9 border-b-2 border-[#fbeaa0] bg-[#5a5752] pt-[2px]"><Hex s={17} /></Btn>
      <div className="ml-auto flex items-center">
        <Btn label="Show hidden icons" className="w-6"><Svg w={12} h={8}><path d="M.5 7 6 1.500 11.500 7" stroke="#eee" strokeWidth="1.300" /></Svg></Btn>
        <Btn label="Recorder" className="w-6"><Svg w={14} h={14}><circle cx="7" cy="7" r="6.200" stroke="#fff" strokeWidth="1.300" /><circle cx="7" cy="7" r="3" fill="#fff" /></Svg></Btn>
        <Btn label="Network" className="w-6"><Svg w={16} h={14}><path d="M4.500 2.500h11v8h-11M10 10.500v3M6 13.500h8M.5.500h4v4h-4zM2.500 4.500v9h2" stroke="#fff" /></Svg></Btn>
        <Btn label="Volume" className="w-6"><Svg w={16} h={12}><path d="M.5 4.500h2l3.500-3v9l-3.500-3h-2zM8 4.500c1 1 1 2 0 3M10.500 2.500c2 2 2 5 0 7" stroke="#fff" /><path d="M13 1c3 3 3 7 0 10" stroke="#999" /></Svg></Btn>
        <time className="w-[60px] text-center whitespace-nowrap">9:54 AM</time>
        <Btn label="Notifications" className="ml-3 w-[17px]"><Svg w={17} h={16}><path d="M0 0h17v13h-6l-3 3v-3H0z" fill="#fff" /><path d="M3 3.500h11M3 6.500h11M3 9.500h7" stroke="#322e28" /></Svg></Btn>
        <div className="mr-1 ml-5 h-full w-px bg-[#777]" />
      </div>
    </footer>
  );
}

export default function App() {
  return (
    <div className="flex h-screen flex-col overflow-hidden bg-[#322e28]">
      <main className="flex min-h-0 flex-1">
        <Excel />
        <Survey />
      </main>
      <Taskbar />
    </div>
  );
}
